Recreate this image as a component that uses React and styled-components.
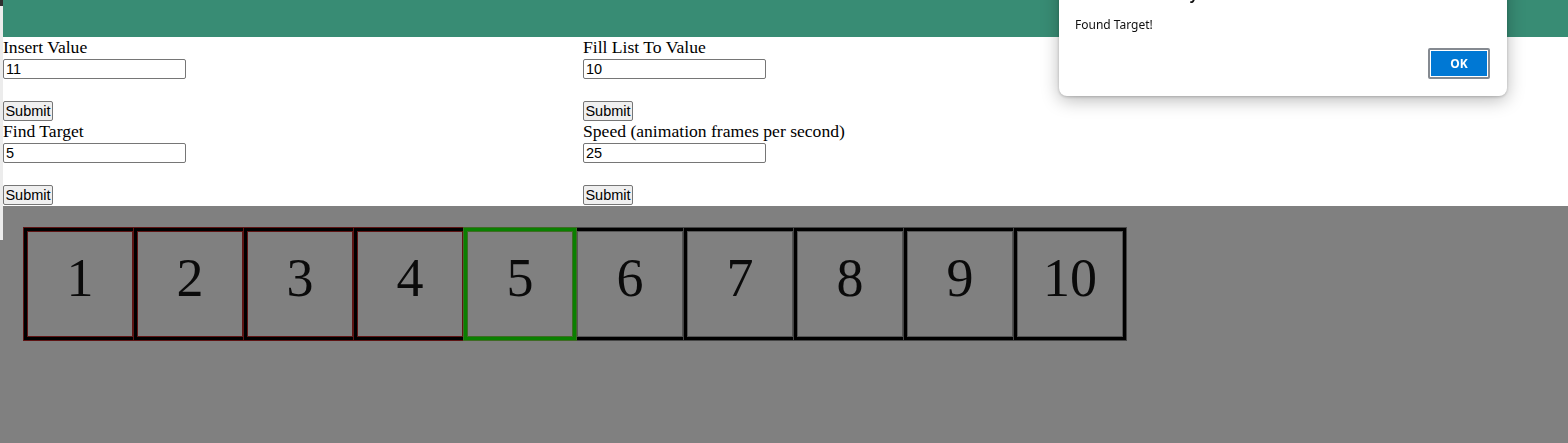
import React from 'react';
import styled, { createGlobalStyle, css } from 'styled-components';

const GlobalStyle = createGlobalStyle`
  html, body {
    margin: 0;
    padding: 0;
    background: #fff;
    font-family: "Liberation Serif", "Times New Roman", serif;
  }
`;

const Page = styled.div`
  display: flex;
  flex-direction: row;
  height: 443px;
  overflow: hidden;
`;

const EdgeStrip = styled.div`
  width: 3px;
  flex-shrink: 0;
  background: linear-gradient(
    to bottom,
    #2f2f2f 0,
    #2f2f2f 6px,
    #ececec 6px,
    #ececec 240px,
    #808080 240px
  );
`;

const Main = styled.div`
  flex: 1;
  display: flex;
  flex-direction: column;
`;

const Header = styled.header`
  height: 37px;
  background: #388c74;
`;

const Controls = styled.div`
  display: grid;
  grid-template-columns: 580px 1fr;
  padding-bottom: 1px;
`;

const Field = styled.div`
  display: flex;
  flex-direction: column;
  align-items: flex-start;
  height: 84px;
`;

const Label = styled.label`
  display: block;
  height: 18px;
  line-height: 20px;
  font-size: 17.6px;
  color: #000;
  white-space: nowrap;
`;

const Input = styled.input`
  box-sizing: border-box;
  margin: 4px 0 0;
  width: 183px;
  height: 20px;
  padding: 1px 2px;
  border: 1px solid #767676;
  border-radius: 2px;
  font-family: "Liberation Sans", Arial, sans-serif;
  font-size: 14.5px;
  color: #000;
  background: #fff;
  outline: none;
`;

const SubmitButton = styled.button`
  box-sizing: border-box;
  margin: 22px 0 0;
  width: 50px;
  height: 20px;
  padding: 0;
  border: 1px solid #767676;
  border-radius: 2px;
  background: #efefef;
  font-family: "Liberation Sans", Arial, sans-serif;
  font-size: 14.5px;
  line-height: 18px;
  color: #000;
`;

const Stage = styled.div`
  flex: 1;
  background: #808080;
  padding: 22px 21px;
`;

const CellRow = styled.div`
  display: flex;
  flex-direction: row;
`;

const cellStates = {
  visited: css`
    border-color: #000;
    box-shadow: 0 0 0 1px #5e1414, inset 0 0 0 1px #5e1414;
  `,
  found: css`
    border-color: #0a8000;
    box-shadow: 0 0 0 1px #3f6b25, inset 0 0 0 1px #3f6b25;
    position: relative;
    z-index: 1;
  `,
  idle: css`
    border-color: #000;
    box-shadow: 0 0 0 1px #444, inset 0 0 0 1px #555;
  `,
};

const Cell = styled.div`
  box-sizing: border-box;
  width: 112px;
  height: 112px;
  border: 3px solid #000;
  display: flex;
  align-items: center;
  justify-content: center;
  padding-bottom: 12px;
  font-family: "Liberation Serif", "Times New Roman", serif;
  font-size: 54px;
  color: #0a0a0a;
  & + & {
    margin-left: -2px;
  }
  ${(p) => cellStates[p.$state]}
`;

const AlertDialog = styled.div`
  position: fixed;
  top: -30px;
  left: 1059px;
  width: 448px;
  box-sizing: border-box;
  padding: 16px 17px 17px 16px;
  background: #fff;
  border-radius: 8px;
  box-shadow: 0 4px 18px rgba(0, 0, 0, 0.28), 0 1px 3px rgba(0, 0, 0, 0.2);
  font-family: "Noto Sans", "Open Sans", sans-serif;
  z-index: 10;
`;

const AlertTitle = styled.div`
  height: 18px;
  line-height: 18px;
  font-size: 14px;
  font-weight: 700;
  color: #111;
`;

const AlertMessage = styled.div`
  margin-top: 13px;
  height: 16px;
  line-height: 16px;
  font-size: 12px;
  color: #111;
`;

const AlertActions = styled.div`
  display: flex;
  justify-content: flex-end;
  margin-top: 15px;
`;

const OkButton = styled.button`
  box-sizing: border-box;
  width: 62px;
  height: 31px;
  padding: 0;
  border: 2px solid #858a91;
  border-radius: 2px;
  background: #0078d4;
  box-shadow: inset 0 0 0 1px #fff;
  color: #fff;
  font-family: "Noto Sans", "Open Sans", sans-serif;
  font-size: 12px;
  font-weight: 700;
`;

const fields = [
  { label: 'Insert Value', value: '11' },
  { label: 'Fill List To Value', value: '10' },
  { label: 'Find Target', value: '5' },
  { label: 'Speed (animation frames per second)', value: '25' },
];

const target = 5;
const cells = Array.from({ length: 10 }, (_, i) => i + 1);

const cellState = (n) => {
  if (n < target) return 'visited';
  if (n === target) return 'found';
  return 'idle';
};

export default function App() {
  return (
    <>
      <GlobalStyle />
      <Page>
        <EdgeStrip />
        <Main>
          <Header />
          <Controls>
            {fields.map((f) => (
              <Field key={f.label}>
                <Label>{f.label}</Label>
                <Input type="text" defaultValue={f.value} />
                <SubmitButton type="button">Submit</SubmitButton>
              </Field>
            ))}
          </Controls>
          <Stage>
            <CellRow>
              {cells.map((n) => (
                <Cell key={n} $state={cellState(n)}>
                  {n}
                </Cell>
              ))}
            </CellRow>
          </Stage>
        </Main>
      </Page>
      <AlertDialog role="alertdialog">
        <AlertTitle>127.0.0.1:5500 says</AlertTitle>
        <AlertMessage>Found Target!</AlertMessage>
        <AlertActions>
          <OkButton type="button">OK</OkButton>
        </AlertActions>
      </AlertDialog>
    </>
  );
}
